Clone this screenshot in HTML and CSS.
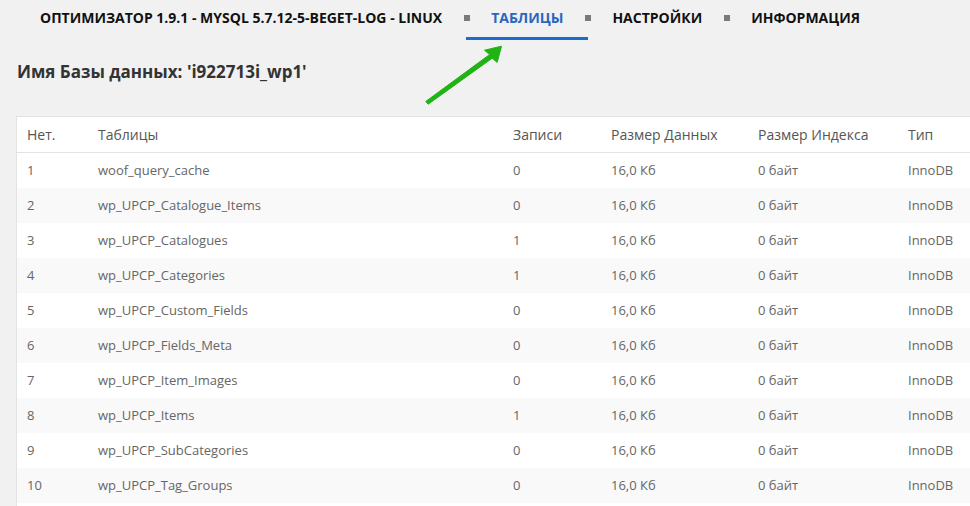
FILE: index.html
```html
<!DOCTYPE html>
<html lang="ru">
<head>
<meta charset="utf-8">
<title>Оптимизатор</title>
<link rel="stylesheet" href="styles.css">
</head>
<body>
<div class="page">
  <nav class="nav">
    <span class="nav-item">Оптимизатор 1.9.1 - MySQL 5.7.12-5-beget-log - Linux</span>
    <span class="sep"></span>
    <span class="nav-item active">Таблицы</span>
    <span class="sep"></span>
    <span class="nav-item">Настройки</span>
    <span class="sep"></span>
    <span class="nav-item">Информация</span>
  </nav>
  <svg class="arrow" width="90" height="70" viewBox="0 0 90 70">
    <polygon points="5.8,61.4 69.6,14.6 64.5,10.2 81.5,6.2 77.2,22.4 72.2,18.2 8.2,64.2" fill="#1fb414" stroke="#1fb414" stroke-width="1" stroke-linejoin="round"/>
  </svg>
  <h1 class="title">Имя Базы данных: 'i922713i_wp1'</h1>
  <div class="card">
    <table class="tbl">
      <colgroup>
        <col class="c1"><col class="c2"><col class="c3"><col class="c4"><col class="c5"><col class="c6">
      </colgroup>
      <thead>
        <tr><th>Нет.</th><th>Таблицы</th><th>Записи</th><th>Размер Данных</th><th>Размер Индекса</th><th>Тип</th></tr>
      </thead>
      <tbody>
        <tr><td>1</td><td>woof_query_cache</td><td>0</td><td>16,0 Кб</td><td>0 байт</td><td>InnoDB</td></tr>
        <tr><td>2</td><td>wp_UPCP_Catalogue_Items</td><td>0</td><td>16,0 Кб</td><td>0 байт</td><td>InnoDB</td></tr>
        <tr><td>3</td><td>wp_UPCP_Catalogues</td><td>1</td><td>16,0 Кб</td><td>0 байт</td><td>InnoDB</td></tr>
        <tr><td>4</td><td>wp_UPCP_Categories</td><td>1</td><td>16,0 Кб</td><td>0 байт</td><td>InnoDB</td></tr>
        <tr><td>5</td><td>wp_UPCP_Custom_Fields</td><td>0</td><td>16,0 Кб</td><td>0 байт</td><td>InnoDB</td></tr>
        <tr><td>6</td><td>wp_UPCP_Fields_Meta</td><td>0</td><td>16,0 Кб</td><td>0 байт</td><td>InnoDB</td></tr>
        <tr><td>7</td><td>wp_UPCP_Item_Images</td><td>0</td><td>16,0 Кб</td><td>0 байт</td><td>InnoDB</td></tr>
        <tr><td>8</td><td>wp_UPCP_Items</td><td>1</td><td>16,0 Кб</td><td>0 байт</td><td>InnoDB</td></tr>
        <tr><td>9</td><td>wp_UPCP_SubCategories</td><td>0</td><td>16,0 Кб</td><td>0 байт</td><td>InnoDB</td></tr>
        <tr><td>10</td><td>wp_UPCP_Tag_Groups</td><td>0</td><td>16,0 Кб</td><td>0 байт</td><td>InnoDB</td></tr>
      </tbody>
    </table>
  </div>
</div>
</body>
</html>
```
FILE: styles.css
```css
html, body {
  margin: 0;
  padding: 0;
  overflow: hidden;
  background: #f1f1f1;
}
body {
  font-family: "Open Sans", "Liberation Sans", sans-serif;
  color: #333;
}
.page {
  position: relative;
  width: 1020px;
}
.nav {
  display: flex;
  align-items: flex-start;
  height: 40px;
  padding-left: 40px;
}
.nav-item {
  font-size: 14px;
  font-weight: 700;
  line-height: 19px;
  text-transform: uppercase;
  color: #111;
  padding: 8px 0 10px;
  border-bottom: 3px solid transparent;
}
.nav-item.active {
  color: #2a66c0;
  border-bottom-color: #1a6ccf;
  margin: 0 -25px;
  padding-left: 25px;
  padding-right: 25px;
}
.sep {
  width: 6px;
  height: 6px;
  background: #7a7a7a;
  margin: 15px 21px 0 22px;
}
.arrow {
  position: absolute;
  left: 420px;
  top: 40px;
}
.title {
  margin: 20px 0 0 17px;
  font-size: 17px;
  line-height: 24px;
  font-weight: 700;
  color: #333;
}
.card {
  margin: 32px 0 0 16px;
  padding-bottom: 20px;
  background: #fff;
  border: 1px solid #e3e3e3;
}
.tbl {
  border-collapse: collapse;
  table-layout: fixed;
  width: 1000px;
}
.c1 { width: 71px; }
.c2 { width: 415px; }
.c3 { width: 98px; }
.c4 { width: 147px; }
.c5 { width: 150px; }
.c6 { width: 119px; }
.tbl th {
  text-align: left;
  font-weight: 400;
  font-size: 14px;
  color: #555;
  height: 35px;
  padding: 0 0 0 10px;
  border-bottom: 1px solid #e3e3e3;
  vertical-align: middle;
}
.tbl td {
  font-size: 13px;
  color: #666;
  height: 34px;
  padding: 0 0 1px 10px;
  vertical-align: middle;
}
.tbl tbody tr:nth-child(even) td {
  background: #f9f9f9;
}
```
